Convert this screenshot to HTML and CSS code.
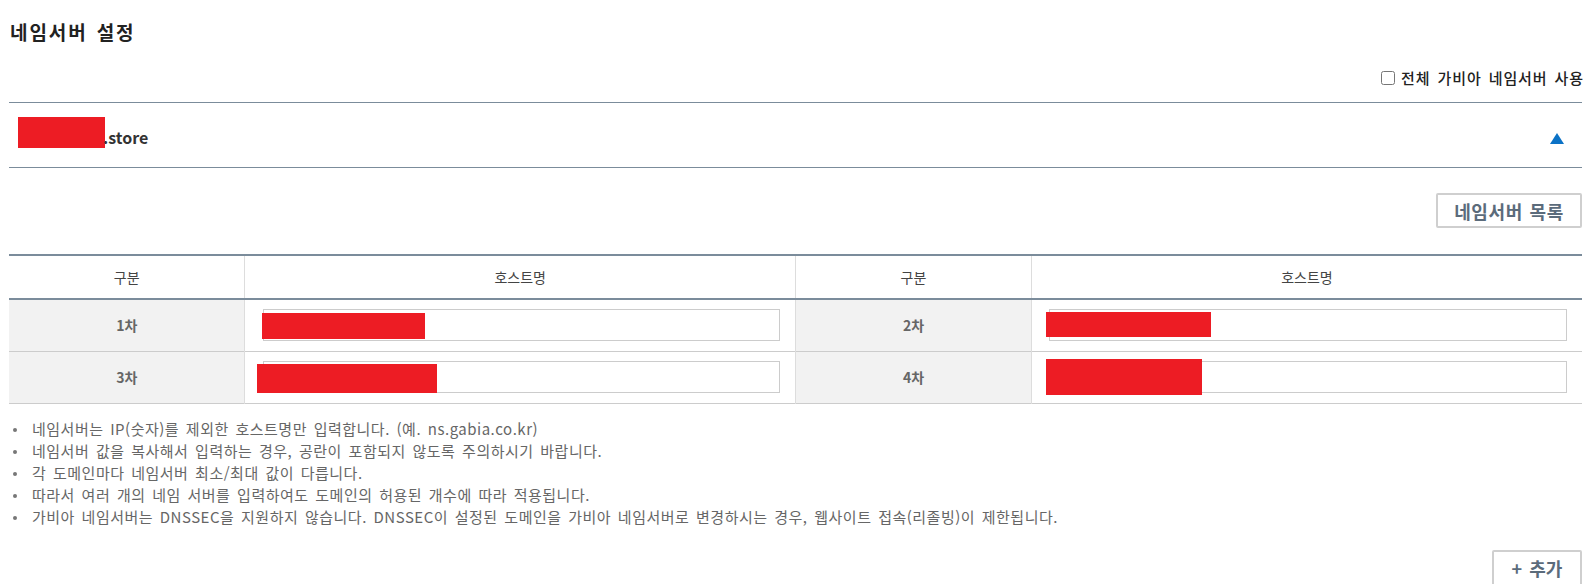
FILE: index.html
```html
<!DOCTYPE html>
<html lang="ko">
<head>
<meta charset="utf-8">
<title>네임서버 설정</title>
<link rel="stylesheet" href="styles.css">
</head>
<body>
<div class="page">
  <h2 class="title">네임서버 설정</h2>
  <div class="all-use">
    <label class="check-label"><input type="checkbox" class="check"><span>전체 가비아 네임서버 사용</span></label>
  </div>
  <div class="domain-head">
    <div class="domain-name"><span class="redact redact-domain"></span>.store</div>
    <span class="toggle"></span>
  </div>
  <div class="btn-row">
    <button class="btn btn-list" type="button">네임서버 목록</button>
  </div>
  <table class="ns-table">
    <colgroup>
      <col class="c-label"><col class="c-host"><col class="c-label"><col class="c-host">
    </colgroup>
    <thead>
      <tr><th>구분</th><th>호스트명</th><th>구분</th><th>호스트명</th></tr>
    </thead>
    <tbody>
      <tr>
        <td class="lbl">1차</td>
        <td class="host"><div class="field"><input type="text" class="inp"><span class="redact r1"></span></div></td>
        <td class="lbl">2차</td>
        <td class="host host-r"><div class="field"><input type="text" class="inp"><span class="redact r2"></span></div></td>
      </tr>
      <tr>
        <td class="lbl">3차</td>
        <td class="host"><div class="field"><input type="text" class="inp"><span class="redact r3"></span></div></td>
        <td class="lbl">4차</td>
        <td class="host host-r"><div class="field"><input type="text" class="inp"><span class="redact r4"></span></div></td>
      </tr>
    </tbody>
  </table>
  <ul class="notes">
    <li>네임서버는 IP(숫자)를 제외한 호스트명만 입력합니다. (예. ns.gabia.co.kr)</li>
    <li>네임서버 값을 복사해서 입력하는 경우, 공란이 포함되지 않도록 주의하시기 바랍니다.</li>
    <li>각 도메인마다 네임서버 최소/최대 값이 다릅니다.</li>
    <li>따라서 여러 개의 네임 서버를 입력하여도 도메인의 허용된 개수에 따라 적용됩니다.</li>
    <li>가비아 네임서버는 DNSSEC을 지원하지 않습니다. DNSSEC이 설정된 도메인을 가비아 네임서버로 변경하시는 경우, 웹사이트 접속(리졸빙)이 제한됩니다.</li>
  </ul>
  <div class="btn-row btn-row-add">
    <button class="btn btn-add" type="button">+ 추가</button>
  </div>
</div>
</body>
</html>
```
FILE: styles.css
```css
* { box-sizing: border-box; }
html, body { margin: 0; padding: 0; background: #fff; }
body {
  font-family: "Noto Sans CJK KR", "Noto Sans", sans-serif;
  color: #333;
  font-size: 14px;
}
.page {
  padding: 0 6px 0 9px;
}
.title {
  margin: 20px 0 0 1px;
  font-size: 19px;
  line-height: 24px;
  font-weight: 700;
  letter-spacing: 1.9px;
  word-spacing: 2px;
  color: #222;
}
.all-use {
  margin-top: 24px;
  height: 20px;
  display: flex;
  justify-content: flex-end;
  margin-bottom: 14px;
}
.check-label {
  display: flex;
  align-items: center;
  font-size: 15px;
  line-height: 20px;
  font-weight: 500;
  letter-spacing: 0.9px;
  word-spacing: 2px;
  color: #222;
  margin-right: -2px;
}
.check {
  width: 14px;
  height: 14px;
  margin: 0 6px 0 0;
}
.domain-head {
  border-top: 1px solid #7b8c9b;
  border-bottom: 1px solid #7b8c9b;
  height: 66px;
  display: flex;
  align-items: center;
  justify-content: space-between;
  padding: 0 18px 0 9px;
}
.domain-name {
  display: flex;
  align-items: flex-start;
  font-size: 16px;
  font-weight: 700;
  color: #333;
  line-height: 22px;
  padding-top: 4px;
}
.redact { background: #ed1c24; display: block; }
.redact-domain {
  width: 87px;
  height: 31px;
  margin-top: -9px;
  margin-right: -2px;
}
.toggle {
  width: 0;
  height: 0;
  border-left: 7px solid transparent;
  border-right: 7px solid transparent;
  border-bottom: 11px solid #0b72c6;
  margin-top: 7px;
}
.btn-row {
  display: flex;
  justify-content: flex-end;
  margin-top: 25px;
}
.btn {
  background: #fff;
  border: 2px solid #cfcfcf;
  border-radius: 2px;
  color: #5b6b7b;
  font-family: "Noto Sans CJK KR", "Noto Sans", sans-serif;
  font-weight: 700;
  font-size: 18px;
  padding: 0;
}
.btn-list {
  width: 146px;
  height: 35px;
  letter-spacing: 0.6px;
  word-spacing: 1px;
}
.ns-table {
  width: 100%;
  margin-top: 26px;
  border-collapse: collapse;
  table-layout: fixed;
  border-top: 2px solid #7b8c9b;
  border-bottom: 1px solid #cccccc;
}
.c-label { width: 15%; }
.c-host { width: 35%; }
.ns-table th {
  height: 44px;
  font-weight: 400;
  font-size: 14px;
  color: #444;
  border-bottom: 2px solid #7b8c9b;
  border-left: 1px solid #dddddd;
  padding: 0;
}
.ns-table th:first-child { border-left: 0; }
.ns-table td {
  height: 52px;
  padding: 0;
  border-left: 1px solid #dddddd;
  border-top: 1px solid #cccccc;
}
.ns-table tbody tr:first-child td { border-top: 0; }
.ns-table td:first-child { border-left: 0; }
.lbl {
  background: #f2f2f2;
  text-align: center;
  font-weight: 700;
  color: #666;
  font-size: 14px;
}
.host { position: relative; }
.field {
  padding: 0 15px 0 18px;
  height: 32px;
}
.host-r .field { padding: 0 15px 0 17px; }
.inp {
  width: 100%;
  height: 32px;
  border: 1px solid #cccccc;
  margin: 0;
  padding: 0 8px;
  display: block;
  font-family: inherit;
}
.redact.r1 { position: absolute; left: 17px; top: 13px; width: 163px; height: 26px; }
.redact.r2 { position: absolute; left: 14px; top: 12px; width: 165px; height: 25px; }
.redact.r3 { position: absolute; left: 12px; top: 12px; width: 180px; height: 29px; }
.redact.r4 { position: absolute; left: 14px; top: 7px; width: 156px; height: 36px; }
.notes {
  list-style: none;
  margin: 14px 0 0 0;
  padding: 0;
}
.notes li {
  position: relative;
  padding-left: 23px;
  font-size: 15px;
  line-height: 22px;
  letter-spacing: 0.5px;
  word-spacing: 2px;
  color: #666;
}
.notes li::before {
  content: "";
  position: absolute;
  left: 4px;
  top: 10px;
  width: 4px;
  height: 4px;
  border-radius: 50%;
  background: #777;
}
.btn-row-add { margin-top: 22px; }
.btn-add {
  width: 90px;
  height: 36px;
  word-spacing: 2px;
}
```
